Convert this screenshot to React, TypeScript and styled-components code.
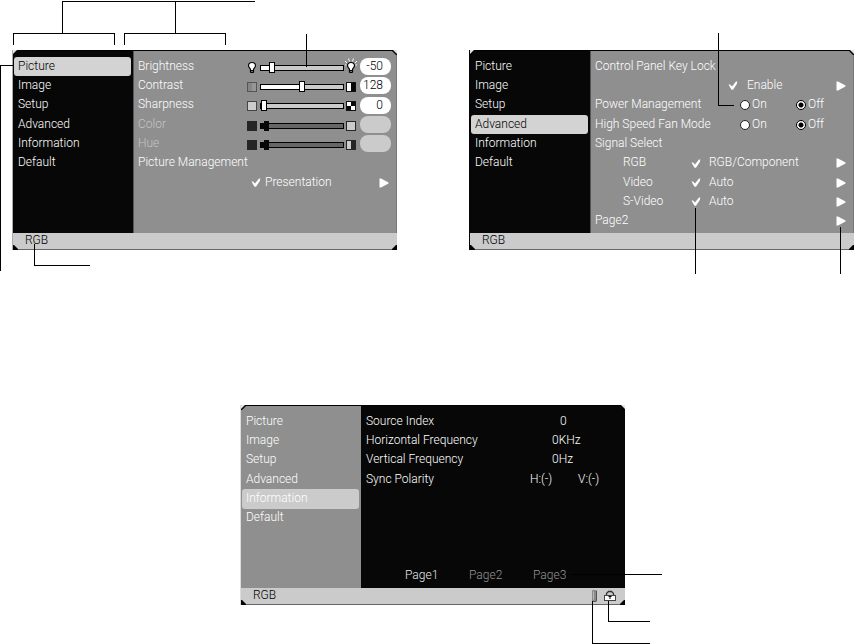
import React, { useState } from "react";
import styled, { createGlobalStyle, css } from "styled-components";

const GlobalStyle = createGlobalStyle`
  *, *::before, *::after { box-sizing: border-box; }
  body {
    margin: 0;
    background: #fff;
    font-family: Roboto, "Liberation Sans", sans-serif;
    font-size: 12px;
    font-weight: 300;
    line-height: 16px;
  }
  button, input, output { font: inherit; }
`;

const Page = styled.main`
  min-height: 100vh;
  overflow: hidden;
  padding: 50px 0 39px 13px;
`;

const TopRow = styled.div`
  display: grid;
  grid-template-columns: repeat(2, minmax(0, 384px));
  justify-content: space-between;
`;

const BottomRow = styled.div`
  display: grid;
  grid-template-columns: minmax(0, 384px);
  justify-content: center;
  margin: 155px 1px 0 0;
`;

const Figure = styled.figure`
  position: relative;
  margin: 0;
`;

const Panel = styled.section<{ $edge: string }>`
  border-top: 1px solid #000;
  border-bottom: 1px solid #666;
  box-shadow: -1px 0 0 ${(p) => p.$edge};
`;

const Body = styled.div`
  display: grid;
  grid-template-columns: 121px 1fr;
  min-height: 182px;
`;

const rows = css`
  display: grid;
  grid-template-rows: repeat(9, 1fr);
  margin: 0;
  padding: 6px 0 2px;
  list-style: none;
`;

const Menu = styled.ul<{ $light?: boolean }>`
  ${rows}
  padding-left: 1px;
  background: ${(p) => (p.$light ? "#8f8f8f" : "#070707")};
  border-right: 1px solid ${(p) => (p.$light ? "#070707" : "#555")};
`;

const MenuItem = styled.li`
  display: grid;
`;

const MenuButton = styled.button<{ $active: boolean; $light?: boolean }>`
  margin: 0 2px 0 0;
  padding: 0 4px 2px;
  border: 0;
  border-radius: 3px;
  text-align: left;
  background: ${(p) => (p.$active ? (p.$light ? "#cbcbcb" : "#d3d3d3") : "transparent")};
  color: ${(p) => (p.$active && !p.$light ? "#000" : "#fff")};
`;

const Content = styled.div<{ $dark?: boolean }>`
  ${rows}
  padding-left: 4px;
  color: #fff;
  background: ${(p) => (p.$dark ? "#070707" : "#8f8f8f")};
  border-right: 1px solid ${(p) => (p.$dark ? "#070707" : "#777")};
`;

const Row = styled.div<{ $indent?: boolean; $dim?: boolean }>`
  display: flex;
  align-items: center;
  padding-left: ${(p) => (p.$indent ? 28 : 0)}px;
  color: ${(p) => (p.$dim ? "#c4c4c4" : "inherit")};
`;

const Label = styled.label`
  flex: 1;
  padding-bottom: 2px;
  white-space: nowrap;
`;

const Name = styled.span`
  flex: 1;
  padding-bottom: 2px;
  white-space: nowrap;
`;

const SliderGroup = styled.div`
  display: grid;
  grid-template-columns: 11px 84px 10px;
  align-items: center;
  gap: 2px;
  padding-top: 2px;
`;

const Range = styled.input`
  appearance: none;
  width: 84px;
  height: 11px;
  margin: 0;
  background: transparent;
  &::-webkit-slider-runnable-track {
    height: 6px;
    border: 1px solid #000;
    background: linear-gradient(to right, #fff var(--fill), #cbcbcb var(--fill));
  }
  &::-webkit-slider-thumb {
    appearance: none;
    width: 6px;
    height: 11px;
    margin-top: -4px;
    border: 1px solid #000;
    background: #fff;
  }
  &:disabled::-webkit-slider-runnable-track {
    background: #666;
  }
  &:disabled::-webkit-slider-thumb {
    width: 8px;
    height: 10px;
    margin-top: -3px;
    border: 0;
    background:
      linear-gradient(#070707, #070707) 3px 0 / 5px 10px no-repeat,
      linear-gradient(#070707, #070707) 0 2px / 8px 6px no-repeat;
  }
`;

const Pill = styled.output<{ $off?: boolean }>`
  width: 31px;
  height: 17px;
  margin: 0 5px 0 4px;
  padding-right: 8px;
  border-radius: 8px;
  text-align: right;
  line-height: 17px;
  color: #000;
  background: ${(p) => (p.$off ? "#cbcbcb" : "#fff")};
`;

const Choice = styled.button<{ $width: number; $gap: number }>`
  display: grid;
  grid-template-columns: 10px 1fr 10px;
  align-items: center;
  gap: ${(p) => p.$gap}px;
  width: ${(p) => p.$width}px;
  padding: 0 7px 0 0;
  border: 0;
  background: none;
  color: inherit;
  text-align: left;
`;

const ChoiceText = styled.span`
  padding-bottom: 2px;
  white-space: nowrap;
`;

const MoreButton = styled.button`
  display: grid;
  padding: 0 7px 0 0;
  border: 0;
  background: none;
`;

const Radios = styled.div`
  display: grid;
  grid-template-columns: 56px 1fr;
  width: 113px;
`;

const RadioLabel = styled.label`
  display: flex;
  align-items: center;
  gap: 2px;
`;

const Radio = styled.input`
  appearance: none;
  width: 10px;
  height: 10px;
  margin: 0;
  border: 1px solid #222;
  border-radius: 50%;
  background: #fff;
  &:checked {
    border-color: #000;
    background: radial-gradient(circle, #000 2px, #fff 3px);
  }
`;

const InfoList = styled.dl`
  display: contents;
`;

const Term = styled.dt`
  flex: 1;
  padding-bottom: 2px;
`;

const Value = styled.dd<{ $inset: number }>`
  display: grid;
  grid-template-columns: 48px 1fr;
  width: 94px;
  margin: 0;
  padding: 0 0 2px ${(p) => p.$inset}px;
  white-space: pre;
`;

const Pages = styled.nav`
  display: grid;
  grid-row: 9;
  grid-template-columns: repeat(3, 64px);
  padding-left: 39px;
`;

const PageButton = styled.button<{ $current: boolean }>`
  padding: 0 0 2px;
  border: 0;
  background: none;
  text-align: left;
  color: ${(p) => (p.$current ? "#e8e8e8" : "#949494")};
`;

const Status = styled.footer`
  display: flex;
  align-items: center;
  justify-content: space-between;
  height: 16px;
  padding: 0 9px 0 12px;
  background: #cbcbcb;
  color: #000;
`;

const StatusText = styled.span`
  padding-bottom: 3px;
`;

const StatusIcons = styled.span`
  display: flex;
  align-items: center;
  gap: 7px;
`;

const CornerMark = styled.svg<{ $v: "top" | "bottom"; $h: "left" | "right" }>`
  position: absolute;
  ${(p) => p.$v}: 0;
  ${(p) => p.$h}: 0;
  transform: scaleX(${(p) => (p.$h === "left" ? 1 : -1)});
`;

const Lines = styled.svg<{ $x: number; $y: number }>`
  position: absolute;
  left: -${(p) => p.$x}px;
  top: -${(p) => p.$y}px;
  overflow: visible;
  pointer-events: none;
`;

function Corners() {
  return (
    <>
      {(["left", "right"] as const).map((h) => (
        <React.Fragment key={h}>
          <CornerMark $v="top" $h={h} width="5" height="5" aria-hidden="true">
            <path d="M0 0H5L0 5Z" fill="#e4e4e4" />
            <path d="M5 0L0 5" stroke="#000" strokeWidth="1.4" />
          </CornerMark>
          <CornerMark $v="bottom" $h={h} width="5" height="5" aria-hidden="true">
            <path d="M0 0V5H5V4L1 0Z" fill="#000" />
          </CornerMark>
        </React.Fragment>
      ))}
    </>
  );
}

function Callouts({ x, y, d }: { x: number; y: number; d: string }) {
  return (
    <Lines $x={x} $y={y} width="1" height="1" aria-hidden="true">
      <path d={d} transform="translate(.5 .5)" fill="none" stroke="#000" shapeRendering="crispEdges" />
    </Lines>
  );
}

const Check = () => (
  <svg width="10" height="9" viewBox="0 0 10 9" aria-hidden="true">
    <path d="M0.5 3.5H2L4 5.5L8 0.5H9.3L8.8 3L5 8.7H3.5Z" fill="#fff" />
  </svg>
);

const Arrow = () => (
  <svg width="10" height="10" viewBox="0 0 10 10" aria-hidden="true">
    <path d="M0.5 0.5H2L9.5 4.5V5.5L2 9.5H0.5Z" fill="#fff" />
  </svg>
);

function Bulb({ rays }: { rays?: boolean }) {
  return (
    <svg width="10" height="13" viewBox="0 0 10 13" overflow="visible" aria-hidden="true">
      {rays && (
        <path d="M-1 0L1.5 2.5M2.5 -2.5L3.5 .5M7.5 -2.5L6.5 .5M11 0L8.5 2.5M-1 4H.5M9.5 4H11" stroke="#fff" fill="none" />
      )}
      <path d="M5 1.5C2.8 1.5 1.5 3 1.5 4.8C1.5 6.3 3.3 7.1 3.5 8.5V11H6.5V8.5C6.7 7.1 8.5 6.3 8.5 4.8C8.5 3 7.2 1.5 5 1.5Z" fill="#fff" stroke="#000" strokeWidth="1.2" />
      <path d="M3.5 9.5H6.5M3.5 11.5H6.5" stroke="#000" />
    </svg>
  );
}

type Tone = [string, string, string, string];

/* A 10px swatch made of four quarters: top-left, top-right, bottom-left, bottom-right. */
function Swatch({ tone, edge = "#111" }: { tone: Tone; edge?: string }) {
  return (
    <svg width="10" height="10" viewBox="0 0 10 10" aria-hidden="true" shapeRendering="crispEdges">
      <rect width="10" height="10" fill={edge} />
      <rect x="1" y="1" width="4" height="4" fill={tone[0]} />
      <rect x="5" y="1" width="4" height="4" fill={tone[1]} />
      <rect x="1" y="5" width="4" height="4" fill={tone[2]} />
      <rect x="5" y="5" width="4" height="4" fill={tone[3]} />
    </svg>
  );
}

const flat = (c: string): Tone => [c, c, c, c];
const halves = (a: string, b: string): Tone => [a, b, a, b];

const menuItems = ["Picture", "Image", "Setup", "Advanced", "Information", "Default"];

function OsdPanel({
  initial,
  light,
  edge,
  icons,
  children,
}: {
  initial: string;
  light?: boolean;
  edge: string;
  icons?: React.ReactNode;
  children: React.ReactNode;
}) {
  const [active, setActive] = useState(initial);
  return (
    <Panel $edge={edge} aria-label={initial}>
      <Body>
        <Menu $light={light}>
          {menuItems.map((item) => (
            <MenuItem key={item}>
              <MenuButton $active={item === active} $light={light} onClick={() => setActive(item)}>
                {item}
              </MenuButton>
            </MenuItem>
          ))}
        </Menu>
        <Content $dark={light}>{children}</Content>
      </Body>
      <Status>
        <StatusText>RGB</StatusText>
        {icons}
      </Status>
      <Corners />
    </Panel>
  );
}

interface SliderProps {
  name: string;
  min: number;
  max: number;
  start: number;
  off?: boolean;
  low: React.ReactNode;
  high: React.ReactNode;
}

function SliderRow({ name, min, max, start, off, low, high }: SliderProps) {
  const [value, setValue] = useState(start);
  const fill = `${((value - min) / (max - min)) * 100}%`;
  return (
    <Row $dim={off}>
      <Label htmlFor={name}>{name}</Label>
      <SliderGroup>
        {low}
        <Range
          id={name}
          type="range"
          min={min}
          max={max}
          value={value}
          disabled={off}
          onChange={(e) => setValue(Number(e.target.value))}
          style={{ "--fill": fill } as React.CSSProperties}
        />
        {high}
      </SliderGroup>
      <Pill htmlFor={name} $off={off}>{off ? "" : value}</Pill>
    </Row>
  );
}

function ChoiceRow({ name, value, width, gap, indent }: { name?: string; value: string; width: number; gap: number; indent?: boolean }) {
  return (
    <Row $indent={indent}>
      <Name>{name}</Name>
      <Choice $width={width} $gap={gap}>
        <Check />
        <ChoiceText>{value}</ChoiceText>
        <Arrow />
      </Choice>
    </Row>
  );
}

function RadioRow({ name }: { name: string }) {
  return (
    <Row role="radiogroup" aria-label={name}>
      <Name>{name}</Name>
      <Radios>
        <RadioLabel>
          <Radio type="radio" name={name} />
          <ChoiceText>On</ChoiceText>
        </RadioLabel>
        <RadioLabel>
          <Radio type="radio" name={name} defaultChecked />
          <ChoiceText>Off</ChoiceText>
        </RadioLabel>
      </Radios>
    </Row>
  );
}

const sliders: SliderProps[] = [
  { name: "Brightness", min: -64, max: 64, start: -50, low: <Bulb />, high: <Bulb rays /> },
  {
    name: "Contrast", min: 0, max: 256, start: 128,
    low: <Swatch tone={halves("#858585", "#979797")} edge="#555" />,
    high: <Swatch tone={halves("#fff", "#070707")} />,
  },
  {
    name: "Sharpness", min: 0, max: 32, start: 0,
    low: <Swatch tone={flat("#cbcbcb")} edge="#444" />,
    high: <Swatch tone={["#fff", "#070707", "#070707", "#fff"]} />,
  },
  {
    name: "Color", min: 0, max: 32, start: 0, off: true,
    low: <Swatch tone={flat("#262626")} edge="#262626" />,
    high: <Swatch tone={flat("#cbcbcb")} edge="#262626" />,
  },
  {
    name: "Hue", min: 0, max: 32, start: 0, off: true,
    low: <Swatch tone={flat("#262626")} edge="#262626" />,
    high: <Swatch tone={halves("#cbcbcb", "#262626")} edge="#262626" />,
  },
];

const readings = [
  { term: "Source Index", values: ["0"], inset: 30 },
  { term: "Horizontal Frequency", values: ["0KHz"], inset: 22 },
  { term: "Vertical Frequency", values: ["0Hz"], inset: 22 },
  { term: "Sync Polarity", values: ["H:(-)", "V:(-)"], inset: 0 },
];

const ThermoIcon = () => (
  <svg width="5" height="12" viewBox="0 0 5 12" aria-hidden="true">
    <rect x="0" y="0" width="5" height="12" rx="1" fill="#8a8a8a" />
    <path d="M4.5 1V10.5L3 11.5H1" stroke="#555" fill="none" />
    <path d="M1.5 1.5V9.5" stroke="#b8b8b8" />
  </svg>
);

const LockIcon = () => (
  <svg width="12" height="12" viewBox="0 0 12 12" aria-hidden="true">
    <path d="M2.5 5V3.5L4.5 1.5H7.5L9.5 3.5V5" stroke="#333" strokeWidth="1.3" fill="none" />
    <rect x="0.5" y="5.5" width="11" height="5" fill="#fff" stroke="#444" />
    <path d="M4.5 6.5H7.5M6 6V9" stroke="#000" />
  </svg>
);

export default function App() {
  const [page, setPage] = useState("Page1");
  return (
    <Page>
      <GlobalStyle />
      <TopRow>
        <Figure>
          <OsdPanel initial="Picture" edge="#aaa">
            {sliders.map((s) => (
              <SliderRow key={s.name} {...s} />
            ))}
            <Row><Name>Picture Management</Name></Row>
            <ChoiceRow value="Presentation" width={145} gap={4} />
          </OsdPanel>
          <Callouts
            x={13}
            y={50}
            d="M62 33V1H254M175 1V33M13 44V33H114V44M124 44V33H225V44M306 33V66M13 65H0V270M34 243V265H89"
          />
        </Figure>
        <Figure>
          <OsdPanel initial="Advanced" edge="#070707">
            <Row><Name>Control Panel Key Lock</Name></Row>
            <ChoiceRow value="Enable" width={125} gap={9} />
            <RadioRow name="Power Management" />
            <RadioRow name="High Speed Fan Mode" />
            <Row><Name>Signal Select</Name></Row>
            <ChoiceRow name="RGB" value="RGB/Component" width={162} gap={8} indent />
            <ChoiceRow name="Video" value="Auto" width={162} gap={8} indent />
            <ChoiceRow name="S-Video" value="Auto" width={162} gap={8} indent />
            <Row>
              <Name>Page2</Name>
              <MoreButton aria-label="Open page 2"><Arrow /></MoreButton>
            </Row>
          </OsdPanel>
          <Callouts x={470} y={50} d="M718 32V105H733M695 207V273M840 226V273" />
        </Figure>
      </TopRow>
      <BottomRow>
        <Figure>
          <OsdPanel
            initial="Information"
            edge="#ddd"
            light
            icons={
              <StatusIcons>
                <ThermoIcon />
                <LockIcon />
              </StatusIcons>
            }
          >
            <InfoList>
              {readings.map((r) => (
                <Row key={r.term}>
                  <Term>{r.term}</Term>
                  <Value $inset={r.inset}>
                    {r.values.map((v) => (
                      <span key={v}>{v}</span>
                    ))}
                  </Value>
                </Row>
              ))}
            </InfoList>
            <Pages aria-label="Pages">
              {["Page1", "Page2", "Page3"].map((p) => (
                <PageButton key={p} $current={p === page} onClick={() => setPage(p)}>
                  {p}
                </PageButton>
              ))}
            </Pages>
          </OsdPanel>
          <Callouts x={241} y={405} d="M569 574H661M608 600V621H649M592 600V643H649" />
        </Figure>
      </BottomRow>
    </Page>
  );
}
